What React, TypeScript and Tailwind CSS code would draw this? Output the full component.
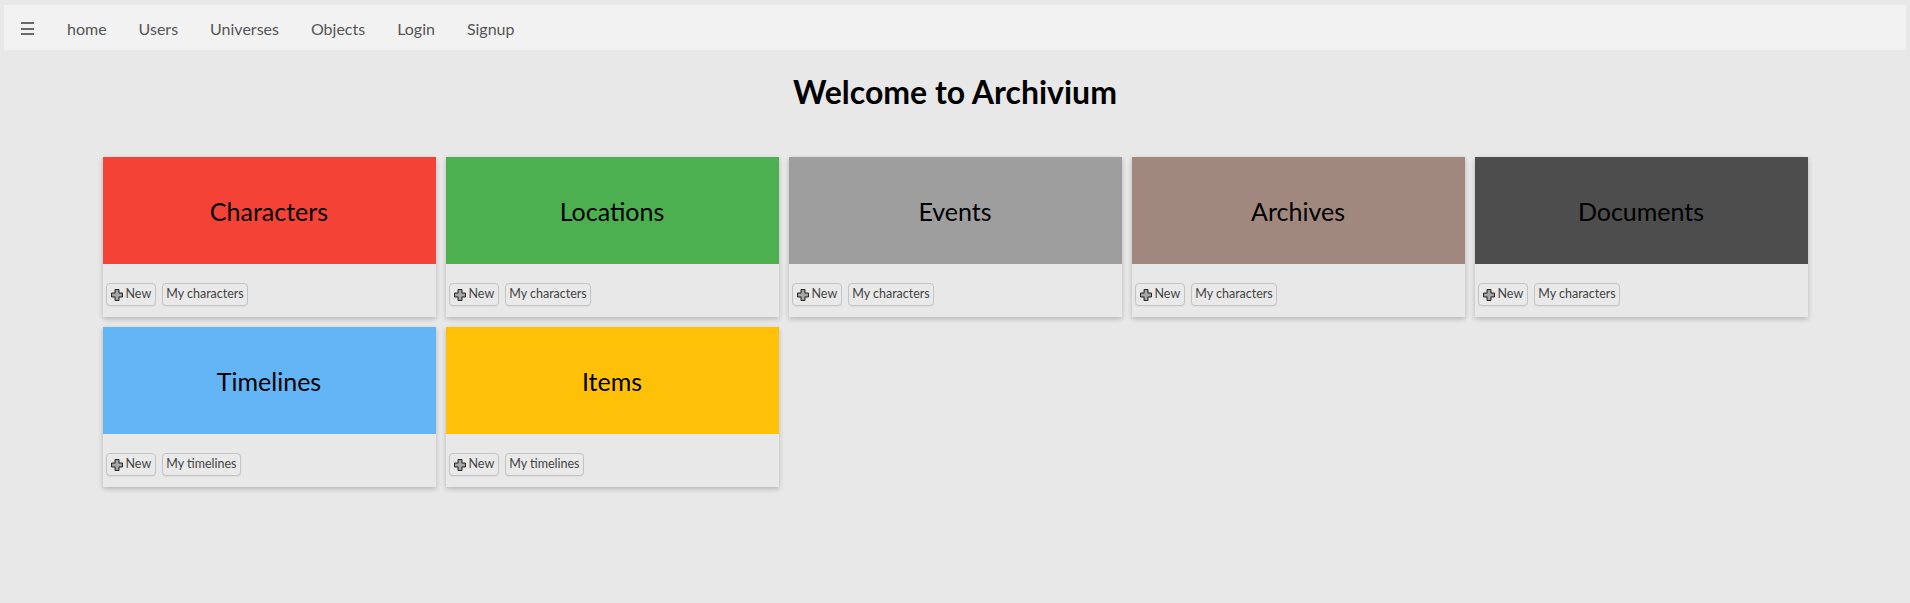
import React from "react";

const cards = [
  { title: "Characters", color: "bg-[#f44336]", list: "My characters" },
  { title: "Locations", color: "bg-[#4caf50]", list: "My characters" },
  { title: "Events", color: "bg-[#9e9e9e]", list: "My characters" },
  { title: "Archives", color: "bg-[#a1887f]", list: "My characters" },
  { title: "Documents", color: "bg-[#4d4d4d]", list: "My characters" },
  { title: "Timelines", color: "bg-[#64b5f6]", list: "My timelines" },
  { title: "Items", color: "bg-[#ffc107]", list: "My timelines" },
];

const links = ["home", "Users", "Universes", "Objects", "Login", "Signup"];

function PlusIcon() {
  return (
    <svg width="14" height="14" viewBox="0 0 14 14" className="shrink-0">
      <path
        d="M5 1.5h4v3.5h3.5v4h-3.5v3.5h-4v-3.5h-3.5v-4h3.5z"
        fill="#8c8c8c"
        stroke="#2a2a2a"
        strokeWidth="1"
      />
      <path d="M6 2.5h2v3.5h3.5v2h-3.5v3.5h-2v-3.5h-3.5v-2h3.5z" fill="#a8a8a8" />
    </svg>
  );
}

function Card({ title, color, list }: { title: string; color: string; list: string }) {
  return (
    <div className="w-[333px] m-[5px] bg-[#e8e8e8] shadow-[0_2px_5px_rgba(0,0,0,0.22)]">
      <div className={`${color} h-[107px] flex items-center justify-center`}>
        <h2 className="text-[25px] font-normal text-black leading-none pt-[2px]">{title}</h2>
      </div>
      <div className="h-[53px] flex items-start gap-[6px] pt-[19px] px-[3px]">
        <button className="flex items-center gap-[2px] h-[23px] pl-[3px] pr-[4px] border border-[#c4c4c4] rounded-[4px] bg-[#e9e9e9] text-[12.5px] text-[#444] shadow-[0_1px_1px_rgba(0,0,0,0.05)]">
          <PlusIcon />
          <span>New</span>
        </button>
        <button className="flex items-center h-[23px] px-[3px] border border-[#c4c4c4] rounded-[4px] bg-[#e9e9e9] text-[12.5px] text-[#444] shadow-[0_1px_1px_rgba(0,0,0,0.05)]">
          {list}
        </button>
      </div>
    </div>
  );
}

export default function App() {
  return (
    <div
      className="min-h-[603px] bg-[#e8e8e8] pt-[5px]"
      style={{ fontFamily: "Lato, 'Liberation Sans', sans-serif" }}
    >
      <nav className="mx-[4px] h-[45px] bg-[#f2f2f2] flex items-center pl-[17px] pt-[2px]">
        <div className="flex flex-col gap-[3.5px] w-[13px] mr-[33px]">
          <span className="block h-[2px] bg-[#6a6a6a]" />
          <span className="block h-[2px] bg-[#6a6a6a]" />
          <span className="block h-[2px] bg-[#6a6a6a]" />
        </div>
        <div className="flex items-center gap-[32px] text-[16px] text-[#555]">
          {links.map((l) => (
            <a key={l} className="cursor-pointer">
              {l}
            </a>
          ))}
        </div>
      </nav>
      <h1 className="text-center text-[32px] font-bold text-black mt-[22px] mb-[40px] leading-[40px]">
        Welcome to Archivium
      </h1>
      <div className="w-[1715px] mx-auto flex flex-wrap">
        {cards.map((c) => (
          <Card key={c.title} {...c} />
        ))}
      </div>
    </div>
  );
}
